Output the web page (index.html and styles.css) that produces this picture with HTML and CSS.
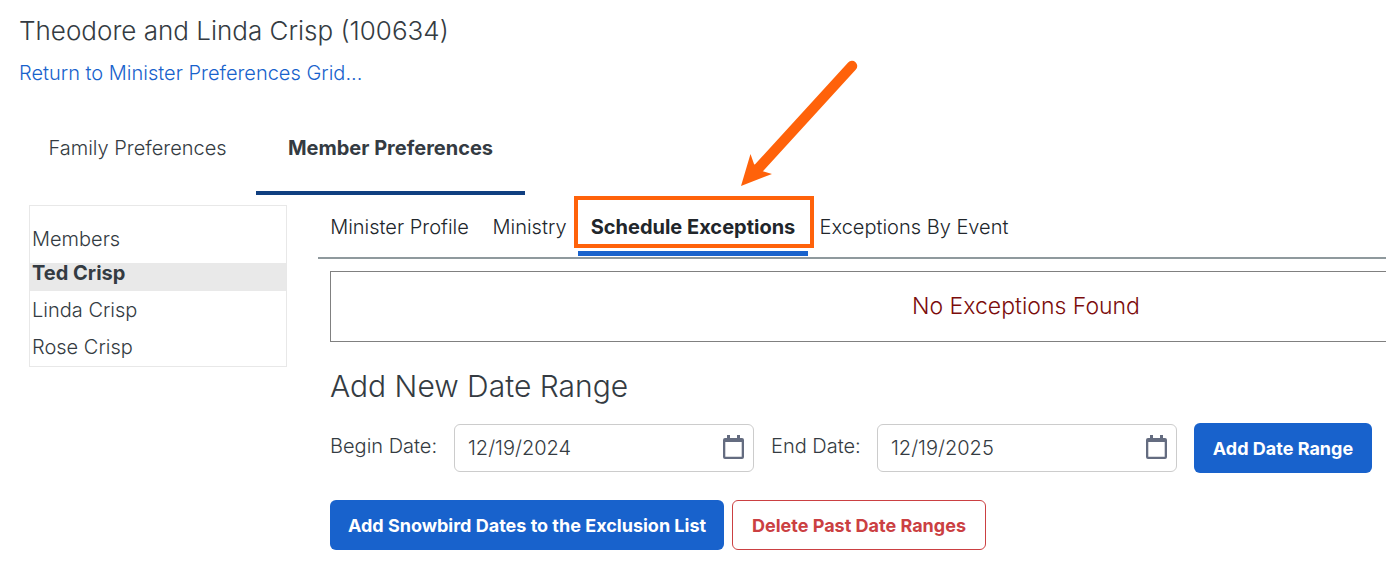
FILE: index.html
```
<!DOCTYPE html>
<html lang="en">

<head>
    <meta charset="UTF-8">
    <meta name="viewport" content="width=device-width, initial-scale=1.0">
    <title>Minister Preferences</title>
    <link rel="stylesheet" href="styles.css">
</head>

<body>
    <header class="page-header">
        <h1>Theodore and Linda Crisp (100634)</h1>
        <a href="#" class="return-link">Return to Minister Preferences Grid...</a>
    </header>

    <nav class="main-tabs">
        <a href="#" class="main-tab family-tab">Family Preferences</a>
        <a href="#" class="main-tab member-tab active">Member Preferences</a>
    </nav>

    <div class="page-content">
        <!-- Member list -->
        <aside class="member-list">
            <h2>Members</h2>
            <ul>
                <li class="active"><a href="#">Ted Crisp</a></li>
                <li><a href="#">Linda Crisp</a></li>
                <li><a href="#">Rose Crisp</a></li>
            </ul>
        </aside>

        <main class="member-panel">
            <nav class="sub-tabs">
                <a href="#" class="sub-tab profile-tab">Minister Profile</a>
                <a href="#" class="sub-tab ministry-tab">Ministry</a>
                <a href="#" class="sub-tab schedule-tab active">Schedule Exceptions
                    <span class="callout-box"></span>
                    <svg class="callout-arrow" width="118" height="128" viewBox="0 0 118 128" aria-hidden="true">
                        <path d="M112 7 16 112" fill="none" stroke="#ff620a" stroke-width="10.500" stroke-linecap="round" />
                        <path d="M1 127 10.500 95 14 105 22 112 32 115Z" fill="#ff620a" />
                    </svg>
                </a>
                <a href="#" class="sub-tab event-tab">Exceptions By Event</a>
            </nav>

            <!-- The result box is wider than the panel -->
            <div class="results">
                <p class="no-exceptions">No Exceptions Found</p>
            </div>

            <form class="date-form">
                <h2>Add New Date Range</h2>
                <div class="date-row">
                    <label for="begin-date" class="begin-label">Begin Date:</label>
                    <div class="date-field">
                        <input type="text" id="begin-date" value="12/19/2024">
                        <button type="button" class="calendar-btn" aria-label="Choose begin date">
                            <svg width="21" height="24" viewBox="0 0 21 24">
                                <path d="M2 3H4V0H7V3H14V0H17V3H19Q21 3 21 5V22Q21 24 19 24H2Q0 24 0 22V5Q0 3 2 3ZM2.300 7V21.700H18.700V7Z" fill="#646c80" fill-rule="evenodd" />
                            </svg>
                        </button>
                    </div>
                    <label for="end-date" class="end-label">End Date:</label>
                    <div class="date-field">
                        <input type="text" id="end-date" value="12/19/2025">
                        <button type="button" class="calendar-btn" aria-label="Choose end date">
                            <svg width="21" height="24" viewBox="0 0 21 24">
                                <path d="M2 3H4V0H7V3H14V0H17V3H19Q21 3 21 5V22Q21 24 19 24H2Q0 24 0 22V5Q0 3 2 3ZM2.300 7V21.700H18.700V7Z" fill="#646c80" fill-rule="evenodd" />
                            </svg>
                        </button>
                    </div>
                    <button type="submit" class="btn primary-btn add-btn">Add Date Range</button>
                </div>
                <div class="action-row">
                    <button type="button" class="btn primary-btn snowbird-btn">Add Snowbird Dates to the Exclusion List</button>
                    <button type="button" class="btn danger-btn delete-btn">Delete Past Date Ranges</button>
                </div>
            </form>
        </main>
    </div>
</body>

</html>
```
FILE: styles.css
```
:root {
    --primary-color: #1862cc;
    --tab-color: #103f80;
    --danger-color: #cb4042;
    --callout-color: #ff620a;
    --border-color: #cccccc;
    --text-color: #343b42;
}

* {
    box-sizing: border-box;
    margin: 0;
    padding: 0;
}

body {
    font-family: Inter, "Liberation Sans", sans-serif;
    font-size: 20px;
    font-weight: 300;
    line-height: 20px;
    color: var(--text-color);
    background-color: #fff;
}

a {
    color: inherit;
    text-decoration: none;
}

h1, h2 {
    font-weight: 300;
}

.page-header {
    padding: 15px 19px 0;
}

.page-header h1 {
    font-size: 26px;
    line-height: 32px;
    margin-bottom: 16px;
}

.return-link {
    display: inline-block;
    color: var(--primary-color);
}

/* Main tabs */
.main-tabs {
    display: flex;
    padding: 18px 19px 0;
}

.main-tab {
    height: 94px;
    padding-top: 37px;
    text-align: center;
    border-bottom: 4px solid transparent;
    white-space: nowrap;
}

.family-tab {
    width: 237px;
}

.member-tab {
    width: 269px;
}

.main-tab.active {
    font-weight: 700;
    border-bottom-color: var(--tab-color);
}

.page-content {
    display: flex;
    align-items: flex-start;
    padding-left: 29px;
}

/* Member list */
.member-list {
    flex: 0 0 258px;
    margin: 10px 31px 0 0;
    border: 1px solid #e8e8e8;
}

.member-list h2 {
    font-size: 20px;
    line-height: 20px;
    padding: 23px 2px 14px;
}

.member-list ul {
    list-style: none;
}

.member-list li {
    padding: 0 2px 8px;
    margin-bottom: 9px;
}

.member-list li:last-child {
    margin-bottom: 1px;
}

.member-list li.active {
    font-weight: 700;
    background-color: #e9e9e9;
}

.member-panel {
    flex: 1;
    min-width: 0;
}

/* Sub tabs */
.sub-tabs {
    display: flex;
    height: 64px;
    color: #21262b;
    border-bottom: 2px solid #8f999d;
}

.sub-tab {
    height: 61px;
    padding-top: 22px;
    text-align: center;
    white-space: nowrap;
}

.profile-tab {
    width: 163px;
}

.ministry-tab {
    width: 97px;
}

.schedule-tab {
    width: 230px;
}

.event-tab {
    width: 212px;
}

.sub-tab.active {
    position: relative;
    font-weight: 700;
    border-bottom: 5px solid var(--primary-color);
}

/* Callout drawn over the active tab */
.callout-box {
    position: absolute;
    top: 1px;
    left: -4px;
    width: 240px;
    height: 52px;
    border: 4px solid var(--callout-color);
}

.callout-arrow {
    position: absolute;
    left: 162px;
    bottom: 64px;
}

.results {
    margin: 12px 0 0 12px;
    overflow: hidden;
}

.no-exceptions {
    margin-right: -336px;
    padding: 20px;
    font-size: 23px;
    line-height: 29px;
    text-align: center;
    color: #7b0c0c;
    border: 1px solid #808080;
}

.date-form {
    padding: 24px 14px 0 12px;
}

.date-form h2 {
    font-size: 30px;
    line-height: 40px;
    margin-bottom: 17px;
}

.date-row,
.action-row {
    display: flex;
    align-items: center;
}

.date-row label {
    white-space: nowrap;
    margin-right: 12px;
    padding-bottom: 4px;
}

.begin-label {
    width: 112px;
}

.end-label {
    width: 94px;
    margin-left: 17px;
}

.date-field {
    position: relative;
    flex: 0 1 300px;
}

.date-field input {
    width: 100%;
    height: 48px;
    padding: 0 60px 0 13px;
    font: inherit;
    color: inherit;
    border: 1px solid var(--border-color);
    border-radius: 6px;
}

.calendar-btn {
    position: absolute;
    top: 11px;
    right: 10px;
    height: 24px;
    border: none;
    background: none;
    cursor: pointer;
}

.calendar-btn svg {
    display: block;
}

.btn {
    height: 50px;
    font-family: inherit;
    font-size: 18px;
    font-weight: 700;
    border: 1px solid transparent;
    border-radius: 6px;
    white-space: nowrap;
    cursor: pointer;
}

.primary-btn {
    background-color: var(--primary-color);
    color: #fff;
}

.danger-btn {
    background-color: #fff;
    border-color: var(--danger-color);
    color: var(--danger-color);
}

.add-btn {
    width: 178px;
    margin-left: 17px;
}

.action-row {
    gap: 8px;
    margin-top: 27px;
}

.snowbird-btn {
    width: 394px;
}

.delete-btn {
    width: 254px;
}
```
